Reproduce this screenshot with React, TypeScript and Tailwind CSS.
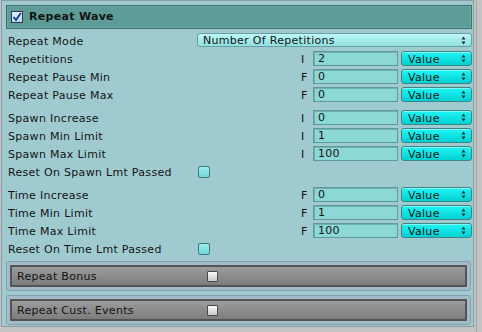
import React from 'react'

const Arrows = () => (
    <svg width="5" height="9" viewBox="0 0 5 9" className="shrink-0">
        <path d="M2.5 0.5 L4.5 3.5 L0.5 3.5 Z" fill="#1d2b2b" />
        <path d="M0.5 5.5 L4.5 5.5 L2.5 8.5 Z" fill="#1d2b2b" />
    </svg>
)

const ValueSelect = () => (
    <div className="w-[71px] h-[15px] mt-[1px] ml-[3px] flex items-center justify-between pl-[6px] pr-[5px] rounded-[3px] border border-[#3f8584] bg-gradient-to-b from-[#1ef5f5] to-[#00d2d4] shadow-[inset_0_1px_0_rgba(255,255,255,0.45)]">
        <span className="leading-none pt-px">Value</span>
        <Arrows />
    </div>
)

const FieldRow = ({ label, kind, value }: { label: string; kind: string; value: string }) => (
    <div className="h-[18px] flex items-start">
        <div className="flex-1 pl-[2px] pt-[1px] leading-[18px]">{label}</div>
        <div className="w-[14px] pl-[2px] pt-[1px] leading-[18px]">{kind}</div>
        <div className="w-[85px] h-[15px] mt-[1px] border border-[#5e9a9b] bg-[#8cd8d7] shadow-[inset_1px_1px_0_rgba(60,110,110,0.35)] pl-[4px] leading-[14px]">
            {value}
        </div>
        <ValueSelect />
    </div>
)

const ResetRow = ({ label }: { label: string }) => (
    <div className="h-[18px] flex items-start">
        <div className="w-[192px] pl-[2px] pt-[1px] leading-[18px]">{label}</div>
        <div className="w-[12px] h-[12px] mt-[3px] rounded-[2px] border border-[#467878] bg-gradient-to-b from-[#9ceeee] to-[#6fd6d6]" />
    </div>
)

const Foldout = ({ label }: { label: string }) => (
    <div className="h-[30px] p-[3px] rounded-[3px] border border-[#879fad] bg-[#a2bcc9]">
        <div className="h-full flex items-center border-2 border-[#545454] rounded-[1px] bg-gradient-to-b from-[#9c9c9c] to-[#7d7d7d]">
            <div className="w-[195px] pl-[5px] pt-px leading-none">{label}</div>
            <div className="w-[11px] h-[11px] border border-[#4a4a4a] rounded-[1px] bg-gradient-to-b from-[#fafafa] to-[#c9c9c9]" />
        </div>
    </div>
)

export default function App() {
    return (
        <div className="w-[482px] h-[332px] bg-[#c3c3c3] flex font-['DejaVu_Sans',sans-serif] text-[11px] tracking-[0.3px] text-[#141414]">
            <div className="ml-[1px] w-[473px] h-[327px] border border-[#8b9ca2] bg-[#9fcbd0] pl-[4px] pr-[1px] pt-[4px] flex flex-col">
                {/* header */}
                <div className="h-[24px] flex items-center gap-[6px] pl-[4px] border border-[#3e6e6c] bg-[#5e9c97] shadow-[inset_0_0_0_1px_rgba(140,195,190,0.35)]">
                    <div className="w-[12px] h-[12px] border border-[#2b3b4c] bg-gradient-to-b from-[#e2f0ff] to-[#b9d6f2] flex items-center justify-center">
                        <svg width="10" height="10" viewBox="0 0 10 10">
                            <path d="M1.5 5 L4 8 L8.8 1" stroke="#173a86" strokeWidth="1.8" fill="none" />
                        </svg>
                    </div>
                    <span className="font-bold pt-px">Repeat Wave</span>
                </div>

                <div className="mt-[3px] flex flex-col">
                    <div className="h-[18px] flex items-start">
                        <div className="w-[191px] pl-[2px] pt-[1px] leading-[18px]">Repeat Mode</div>
                        <div className="flex-1 h-[14px] mt-[1px] flex items-center justify-between pl-[5px] pr-[5px] rounded-[3px] border border-[#6a9fa3] bg-gradient-to-b from-[#bdf8f8] to-[#8fe0e0]">
                            <span className="leading-none pt-px">Number Of Repetitions</span>
                            <Arrows />
                        </div>
                    </div>
                    <FieldRow label="Repetitions" kind="I" value="2" />
                    <FieldRow label="Repeat Pause Min" kind="F" value="0" />
                    <FieldRow label="Repeat Pause Max" kind="F" value="0" />
                </div>

                <div className="mt-[5px] flex flex-col">
                    <FieldRow label="Spawn Increase" kind="I" value="0" />
                    <FieldRow label="Spawn Min Limit" kind="I" value="1" />
                    <FieldRow label="Spawn Max Limit" kind="I" value="100" />
                    <ResetRow label="Reset On Spawn Lmt Passed" />
                </div>

                <div className="mt-[5px] flex flex-col">
                    <FieldRow label="Time Increase" kind="F" value="0" />
                    <FieldRow label="Time Min Limit" kind="F" value="1" />
                    <FieldRow label="Time Max Limit" kind="F" value="100" />
                    <ResetRow label="Reset On Time Lmt Passed" />
                </div>

                <div className="mt-[3px] mr-[1px] flex flex-col gap-[4px]">
                    <Foldout label="Repeat Bonus" />
                    <Foldout label="Repeat Cust. Events" />
                </div>
            </div>
            <div className="ml-[2px] w-px h-full bg-[#a4a4a4]" />
        </div>
    )
}
